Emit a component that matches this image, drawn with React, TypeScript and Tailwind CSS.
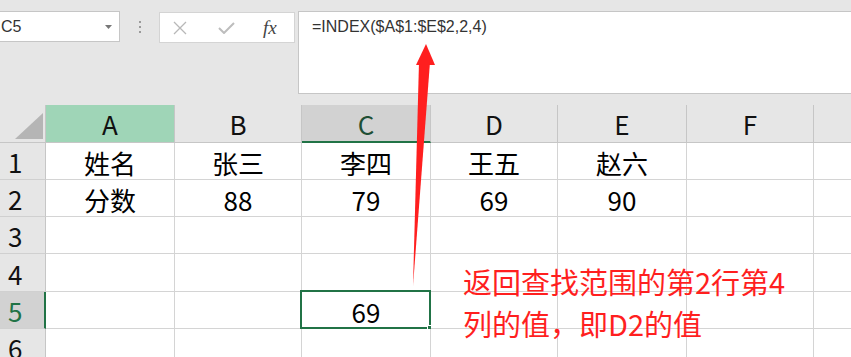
import React from "react";

const colW = [
  "w-[129px]",
  "w-[127px]",
  "w-[129px]",
  "w-[127px]",
  "w-[129px]",
  "w-[127px]",
  "w-[129px]",
];
// G 列在画面外，表头不写字母
const letters = ["A", "B", "C", "D", "E", "F", ""];

// 表格数据（行号 -> 单元格）
const rows: { n: number; h: string; cells: string[] }[] = [
  { n: 1, h: "h-[37px]", cells: ["姓名", "张三", "李四", "王五", "赵六", "", ""] },
  { n: 2, h: "h-[37px]", cells: ["分数", "88", "79", "69", "90", "", ""] },
  { n: 3, h: "h-[37px]", cells: ["", "", "", "", "", "", ""] },
  { n: 4, h: "h-[38px]", cells: ["", "", "", "", "", "", ""] },
  { n: 5, h: "h-[37px]", cells: ["", "", "69", "", "", "", ""] },
  { n: 6, h: "h-[37px]", cells: ["", "", "", "", "", "", ""] },
];

function HeaderCell({ i }: { i: number }) {
  const isA = i === 0;
  const isC = i === 2;
  return (
    <div
      className={`flex shrink-0 items-end justify-center border-r text-[26px] leading-[26px] ${colW[i]} ${
        isA
          ? "border-b border-[#c6c6c6] bg-[#9fd5b7] pb-[5px] text-[#111]"
          : isC
          ? "border-b-2 border-r-[#c6c6c6] border-b-[#217346] bg-[#d2d2d2] pb-[4px] text-[#1e4f34]"
          : "border-b border-[#c6c6c6] bg-[#e6e6e6] pb-[5px] text-[#111]"
      }`}
    >
      {letters[i]}
    </div>
  );
}

export default function App() {
  return (
    <div className="relative h-[357px] w-[851px] overflow-hidden bg-[#e6e6e6] font-['Noto_Sans_CJK_SC',sans-serif]">
      {/* 名称框 + 编辑栏 */}
      <div className="flex h-[105px] items-start pt-[11px]">
        <div className="flex h-[31px] w-[120px] shrink-0 items-center justify-between border border-l-0 border-[#c6c6c6] bg-white pr-[7px]">
          <span className="pl-px font-['Liberation_Sans',sans-serif] text-[16px] leading-none text-[#333]">
            C5
          </span>
          <svg width="7" height="4" viewBox="0 0 7 4">
            <path d="M0 0h7L3.5 4z" fill="#777" />
          </svg>
        </div>
        <div className="flex w-[39px] shrink-0 flex-col items-center gap-[3px] pt-[10px]">
          <div className="h-[2px] w-[2px] bg-[#9a9a9a]" />
          <div className="h-[2px] w-[2px] bg-[#9a9a9a]" />
          <div className="h-[2px] w-[2px] bg-[#9a9a9a]" />
        </div>
        <div className="mt-px flex h-[31px] w-[136px] shrink-0 items-center border border-[#d4d4d4] bg-white pl-[13px]">
          <svg width="14" height="14" viewBox="0 0 14 14">
            <path d="M1 1l12 12M13 1L1 13" stroke="#b8b8b8" strokeWidth="1.3" />
          </svg>
          <svg className="ml-[31px]" width="17" height="12" viewBox="0 0 17 12">
            <path d="M1 6l5 5L16 1" stroke="#bdbdbd" strokeWidth="2" fill="none" />
          </svg>
          <span className="ml-[28px] font-['Liberation_Serif',serif] text-[19px] italic leading-none text-[#444]">
            fx
          </span>
        </div>
        <div className="ml-[3px] h-[83px] flex-1 border border-r-0 border-[#c6c6c6] bg-white pl-[13px] pt-[7px] font-['Liberation_Sans',sans-serif] text-[16px] leading-[16px] text-[#333]">
          =INDEX($A$1:$E$2,2,4)
        </div>
      </div>

      {/* 表格 */}
      <div className="flex flex-col">
        <div className="flex h-[38px]">
          <div className="relative w-[46px] shrink-0 border-r border-b border-[#c6c6c6] bg-[#e6e6e6]">
            <svg className="absolute left-0 top-0" width="46" height="38" viewBox="0 0 46 38">
              <path d="M43 8v26H15z" fill="#b5b5b5" />
            </svg>
          </div>
          {letters.map((_, i) => (
            <HeaderCell key={i} i={i} />
          ))}
        </div>
        {rows.map((r) => (
          <div key={r.n} className={`flex ${r.h}`}>
            <div
              className={`flex w-[46px] shrink-0 items-end border-b border-[#d0d0d0] pb-[4px] pl-[8px] text-[26px] leading-[26px] ${
                r.n === 5
                  ? "border-r-2 border-r-[#217346] bg-[#d2d2d2] text-[#217346]"
                  : "border-r border-r-[#c6c6c6] bg-[#e6e6e6] text-[#111]"
              }`}
            >
              {r.n}
            </div>
            {r.cells.map((c, i) => (
              <div
                key={i}
                className={`relative flex shrink-0 items-end justify-center border-r border-b border-[#d4d4d4] bg-white pb-[3px] text-[26px] leading-[26px] text-black ${colW[i]}`}
              >
                {c}
                {r.n === 5 && i === 2 && (
                  <div className="absolute -left-[2px] -top-[2px] h-[calc(100%+3px)] w-[calc(100%+3px)] border-2 border-[#217346]">
                    <div className="absolute -bottom-[4px] -right-[4px] h-[6px] w-[6px] border border-white bg-[#217346]" />
                  </div>
                )}
              </div>
            ))}
          </div>
        ))}
      </div>

      {/* 红色箭头标注 */}
      <svg className="pointer-events-none absolute left-0 top-0" width="851" height="357" viewBox="0 0 851 357">
        <path d="M413 286L419 62h11z" fill="#ff1f1f" />
        <path d="M426 44L416 65h19z" fill="#ff1f1f" />
      </svg>
      <div className="absolute left-[463px] top-[260px] whitespace-nowrap text-[29px] leading-[42px] text-[#ff1f1f]">
        <div>返回查找范围的第2行第4</div>
        <div>列的值，即D2的值</div>
      </div>
    </div>
  );
}
